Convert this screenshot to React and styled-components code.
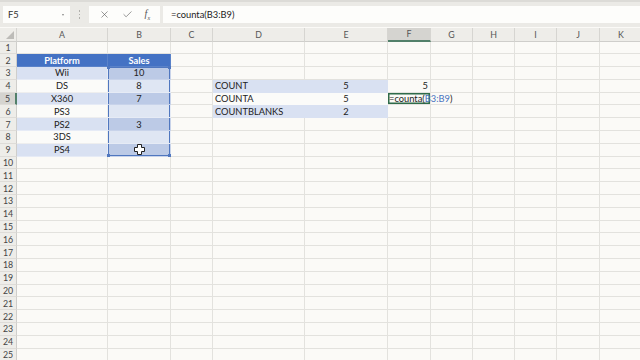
import styled, { createGlobalStyle, css } from 'styled-components';
import { X, Check } from 'lucide-react';

const GlobalStyle = createGlobalStyle`
  body {
    margin: 0;
    background: #fbfaf7;
    font-family: Lato, "Liberation Sans", sans-serif;
    overflow: hidden;
  }
`;

const Page = styled.div`
  width: 640px;
  height: 360px;
  overflow: hidden;
  display: flex;
  flex-direction: column;
  background: #fbfaf7;
`;

const TopBar = styled.div`
  height: 27px;
  flex-shrink: 0;
  display: flex;
  align-items: center;
  padding: 0 0 0 3px;
  background: #ebeae6;
  border-top: 2px solid #dcdbd7;
  box-sizing: border-box;
`;

const NameBox = styled.div`
  width: 67px;
  height: 17px;
  background: #fdfdfb;
  display: flex;
  align-items: center;
  justify-content: space-between;
  padding: 0 6px 0 5px;
  box-sizing: border-box;
  font-size: 9.3px;
  color: #333;
`;

const Caret = styled.span`
  width: 0;
  height: 0;
  border-left: 1.5px solid transparent;
  border-right: 1.5px solid transparent;
  border-top: 2px solid #888;
`;

const Grip = styled.div`
  width: 19px;
  display: flex;
  flex-direction: column;
  align-items: center;
  gap: 2px;
  span {
    width: 1.5px;
    height: 1.5px;
    background: #b0afab;
  }
`;

const ActionBox = styled.div`
  width: 71px;
  height: 17px;
  background: #fdfdfb;
  display: flex;
  align-items: center;
  justify-content: space-around;
  padding: 0 4px;
  box-sizing: border-box;
  color: #555;
`;

const Fx = styled.span`
  font-family: "Liberation Serif", serif;
  font-style: italic;
  font-size: 10px;
  color: #555;
  sub {
    font-size: 6px;
  }
`;

const FormulaBox = styled.div`
  flex: 1;
  height: 17px;
  margin-left: 3px;
  background: #fdfdfb;
  display: flex;
  align-items: center;
  padding-left: 8px;
  font-size: 9.3px;
  color: #222;
`;

const Sheet = styled.div`
  margin-top: 1px;
  display: grid;
  grid-template-columns: 17px 91px 63px 42px 92px 83px 43px 42px 42px 42px 43px 43px;
  grid-template-rows: 13.5px repeat(25, 12.8px);
  width: 660px;
  font-size: 9.3px;
  color: #222;
`;

const ColHead = styled.div`
  display: flex;
  align-items: center;
  justify-content: center;
  background: ${p => (p.$active ? '#d5d4d0' : '#eeede9')};
  border-right: 1px solid #d6d5d1;
  border-bottom: ${p => (p.$active ? '2px solid #52806a' : '1px solid #cfcecb')};
  color: #555;
  font-size: 8.8px;
  box-sizing: border-box;
  position: relative;
`;

const Corner = styled(ColHead)`
  &::after {
    content: '';
    position: absolute;
    right: 2px;
    bottom: 2px;
    border-left: 8px solid transparent;
    border-bottom: 8px solid #bdbcb8;
  }
`;

const RowHead = styled.div`
  display: flex;
  align-items: center;
  justify-content: center;
  background: ${p => (p.$active ? '#d5d4d0' : '#eeede9')};
  border-right: ${p => (p.$active ? '2px solid #52806a' : '1px solid #cfcecb')};
  border-bottom: 1px solid #dedcd8;
  color: #444;
  font-size: 8.8px;
  box-sizing: border-box;
`;

const handle = css`
  content: '';
  position: absolute;
  width: 3px;
  height: 3px;
  background: #5077bf;
`;

const Cell = styled.div`
  position: relative;
  display: flex;
  align-items: center;
  justify-content: ${p => p.$align || 'flex-start'};
  padding: 0 2px;
  background: ${p => p.$fill || 'transparent'};
  border-right: 1px solid ${p => (p.$fill ? p.$line || p.$fill : '#e3e2de')};
  border-bottom: 1px solid ${p => (p.$fill ? p.$line || '#eef0f5' : '#e3e2de')};
  color: ${p => p.$color || '#222'};
  font-weight: ${p => (p.$bold ? 700 : 400)};
  box-sizing: border-box;
  white-space: nowrap;
  min-width: 0;

  ${p =>
    p.$range &&
    css`
      box-shadow:
        inset 1px 0 #5077bf,
        inset -1px 0 #5077bf
        ${p.$range === 'top' ? ', inset 0 1px #5077bf' : ''}
        ${p.$range === 'bottom' ? ', inset 0 -1px #5077bf' : ''};
    `}

  ${p =>
    p.$range === 'top' &&
    css`
      &::before { ${handle} top: -1px; left: -1px; }
      &::after { ${handle} top: -1px; right: -1px; }
    `}

  ${p =>
    p.$range === 'bottom' &&
    css`
      &::before { ${handle} bottom: -1px; left: -1px; }
      &::after { ${handle} bottom: -1px; right: -1px; }
    `}
`;

const EditCell = styled(Cell)`
  z-index: 2;
  overflow: visible;
  padding-left: 1px;
  box-shadow: inset 0 0 0 1.5px #2f6b4a;
  span.ref {
    color: #4a72c0;
  }
  i.caret {
    display: inline-block;
    width: 1px;
    height: 10px;
    background: #222;
    margin-left: 1px;
  }
`;

const PlusCursor = () => (
  <svg width="11" height="11" viewBox="0 0 11 11">
    <path
      d="M3.5 0.5h4v3h3v4h-3v3h-4v-3h-3v-4h3z"
      fill="#fff"
      stroke="#222"
      strokeWidth="1"
    />
  </svg>
);

const cols = ['A', 'B', 'C', 'D', 'E', 'F', 'G', 'H', 'I', 'J', 'K'];

const BLUE = '#d9e1f2';
const BLUE_B = '#bccae6';
const LIGHT_B = '#dfe6f3';
const HEAD = '#4472c4';

const tableRows = [
  ['Wii', '10'],
  ['DS', '8'],
  ['X360', '7'],
  ['PS3', ''],
  ['PS2', '3'],
  ['3DS', ''],
  ['PS4', ''],
];

const summary = {
  4: ['COUNT', '5'],
  5: ['COUNTA', '5'],
  6: ['COUNTBLANKS', '2'],
};

function renderCell(row, col) {
  const key = `${col}${row}`;
  if (row === 2 && (col === 'A' || col === 'B')) {
    return (
      <Cell key={key} $fill={HEAD} $line="#5a82c9" $align="center" $color="#fff" $bold>
        {col === 'A' ? 'Platform' : 'Sales'}
      </Cell>
    );
  }
  if (row >= 3 && row <= 9 && (col === 'A' || col === 'B')) {
    const [name, sales] = tableRows[row - 3];
    const band = row % 2 === 1;
    if (col === 'A') {
      return (
        <Cell key={key} $fill={band ? BLUE : '#fbfbf9'} $line={band ? '#e6ebf6' : '#eeeeee'} $align="center">
          {name}
        </Cell>
      );
    }
    const range = row === 3 ? 'top' : row === 9 ? 'bottom' : 'mid';
    return (
      <Cell
        key={key}
        $fill={band ? BLUE_B : LIGHT_B}
        $line={band ? '#c8d3ea' : '#e6ebf5'}
        $align="center"
        $range={range}
      >
        {row === 9 ? <PlusCursor /> : sales}
      </Cell>
    );
  }
  if (summary[row] && (col === 'D' || col === 'E')) {
    const band = row !== 5;
    const [label, val] = summary[row];
    return (
      <Cell
        key={key}
        $fill={band ? BLUE : '#fbfbf9'}
        $line={band ? BLUE : '#fbfbf9'}
        $align={col === 'E' ? 'center' : 'flex-start'}
      >
        {col === 'D' ? label : val}
      </Cell>
    );
  }
  if (row === 4 && col === 'F') {
    return (
      <Cell key={key} $align="flex-end">
        5
      </Cell>
    );
  }
  if (row === 5 && col === 'F') {
    return (
      <EditCell key={key}>
        =counta(<span className="ref">B3:B9</span>)<i className="caret" />
      </EditCell>
    );
  }
  return <Cell key={key} />;
}

export default function App() {
  const rows = Array.from({ length: 25 }, (_, i) => i + 1);
  return (
    <Page>
      <GlobalStyle />
      <TopBar>
        <NameBox>
          F5
          <Caret />
        </NameBox>
        <Grip>
          <span />
          <span />
          <span />
        </Grip>
        <ActionBox>
          <X size={11} strokeWidth={1.3} />
          <Check size={11} strokeWidth={1.3} />
          <Fx>
            f<sub>x</sub>
          </Fx>
        </ActionBox>
        <FormulaBox>=counta(B3:B9)</FormulaBox>
      </TopBar>
      <Sheet>
        <Corner />
        {cols.map(c => (
          <ColHead key={c} $active={c === 'F'}>
            {c}
          </ColHead>
        ))}
        {rows.map(r => [
          <RowHead key={`r${r}`} $active={r === 5}>
            {r}
          </RowHead>,
          ...cols.map(c => renderCell(r, c)),
        ])}
      </Sheet>
    </Page>
  );
}
